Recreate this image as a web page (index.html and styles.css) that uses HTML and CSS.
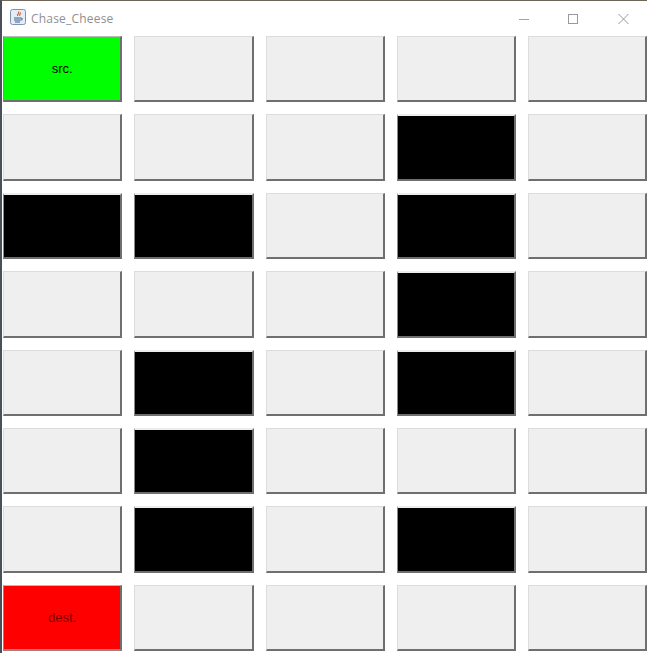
FILE: index.html
```html
<!DOCTYPE html>
<html lang="en">
<head>
<meta charset="utf-8">
<title>Chase_Cheese</title>
<link rel="stylesheet" href="styles.css">
</head>
<body>
<div class="window">
  <header class="titlebar">
    <svg class="app-icon" width="16" height="16" viewBox="0 0 16 16">
      <rect x="0.5" y="0.5" width="15" height="15" rx="2" fill="#e4ecf6" stroke="#7f93ad"/>
      <path d="M8.500 2.500c1.500 1.500-2 2.500-.8 4.500M10.500 3.500c.5 1.200-1.500 1.800-.8 3.300" fill="none" stroke="#d9622b" stroke-width="1.200"/>
      <path d="M4 9h7M4 11h6.500M5 13h5" stroke="#39608f" stroke-width="1"/>
      <path d="M11 9.200c2 -.4 2 1.800 -.5 2" fill="none" stroke="#39608f"/>
    </svg>
    <span class="title">Chase_Cheese</span>
    <div class="controls">
      <svg class="ctl" width="46" height="30" viewBox="0 0 46 30"><path d="M18 16.500h10" stroke="#a3a3a3"/></svg>
      <svg class="ctl" width="54" height="30" viewBox="0 0 54 30"><rect x="21.500" y="11.500" width="9" height="9" fill="none" stroke="#9a9a9a"/></svg>
      <svg class="ctl" width="46" height="30" viewBox="0 0 46 30"><path d="M17.500 11l10 10M27.500 11l-10 10" stroke="#9a9a9a"/></svg>
    </div>
  </header>
  <main class="board">
    <div class="cell green">src.</div><div class="cell"></div><div class="cell"></div><div class="cell"></div><div class="cell"></div>
    <div class="cell"></div><div class="cell"></div><div class="cell"></div><div class="cell black"></div><div class="cell"></div>
    <div class="cell black"></div><div class="cell black"></div><div class="cell"></div><div class="cell black"></div><div class="cell"></div>
    <div class="cell"></div><div class="cell"></div><div class="cell"></div><div class="cell black"></div><div class="cell"></div>
    <div class="cell"></div><div class="cell black"></div><div class="cell"></div><div class="cell black"></div><div class="cell"></div>
    <div class="cell"></div><div class="cell black"></div><div class="cell"></div><div class="cell"></div><div class="cell"></div>
    <div class="cell"></div><div class="cell black"></div><div class="cell"></div><div class="cell black"></div><div class="cell"></div>
    <div class="cell red">dest.</div><div class="cell"></div><div class="cell"></div><div class="cell"></div><div class="cell"></div>
  </main>
</div>
</body>
</html>
```
FILE: styles.css
```css
* { box-sizing: border-box; }
html, body { margin: 0; height: 100%; background: #fff; overflow: hidden; }
.window {
  width: 647px;
  height: 653px;
  display: flex;
  flex-direction: column;
  background: #fff;
  border-left: 2px solid #4a4f5a;
  border-top: 1px solid #6e6558;
}
.titlebar {
  height: 35px;
  flex: none;
  display: flex;
  align-items: center;
  padding-left: 8px;
}
.app-icon { flex: none; margin-bottom: 4px; }
.title {
  margin-left: 5px;
  font: 12px "Open Sans", "Noto Sans", sans-serif;
  color: #8f8f8f;
  letter-spacing: 0.2px;
}
.controls { margin-left: auto; display: flex; align-items: flex-start; margin-top: -1px; height: 30px; }
.ctl { display: block; flex: none; }
.board {
  flex: none;
  margin-left: 1px;
  height: 615px;
  display: grid;
  grid-template-columns: repeat(5, 119.25px);
  grid-template-rows: repeat(8, 66.4px);
  gap: 12px;
}
.cell {
  display: flex;
  align-items: center;
  justify-content: center;
  background: #efefef;
  border-style: solid;
  border-color: #dcdcdc #6f6f6f #6f6f6f #dcdcdc;
  border-width: 1px 2px 2px 1px;
  font: 13px "Liberation Sans", Arial, sans-serif;
  color: #000;
}
.green { background: #00ff00; border-left-color: #8a8a8a; border-top-color: #b8b8b8; }
.red { background: #ff0000; border-left-color: #8a8a8a; border-top-color: #b8b8b8; border-bottom-color: #a08080; color: #7a0000; }
.black { background: #000; border-left-color: #8a8a8a; border-top-color: #ececec; border-top-width: 2px; }
```
